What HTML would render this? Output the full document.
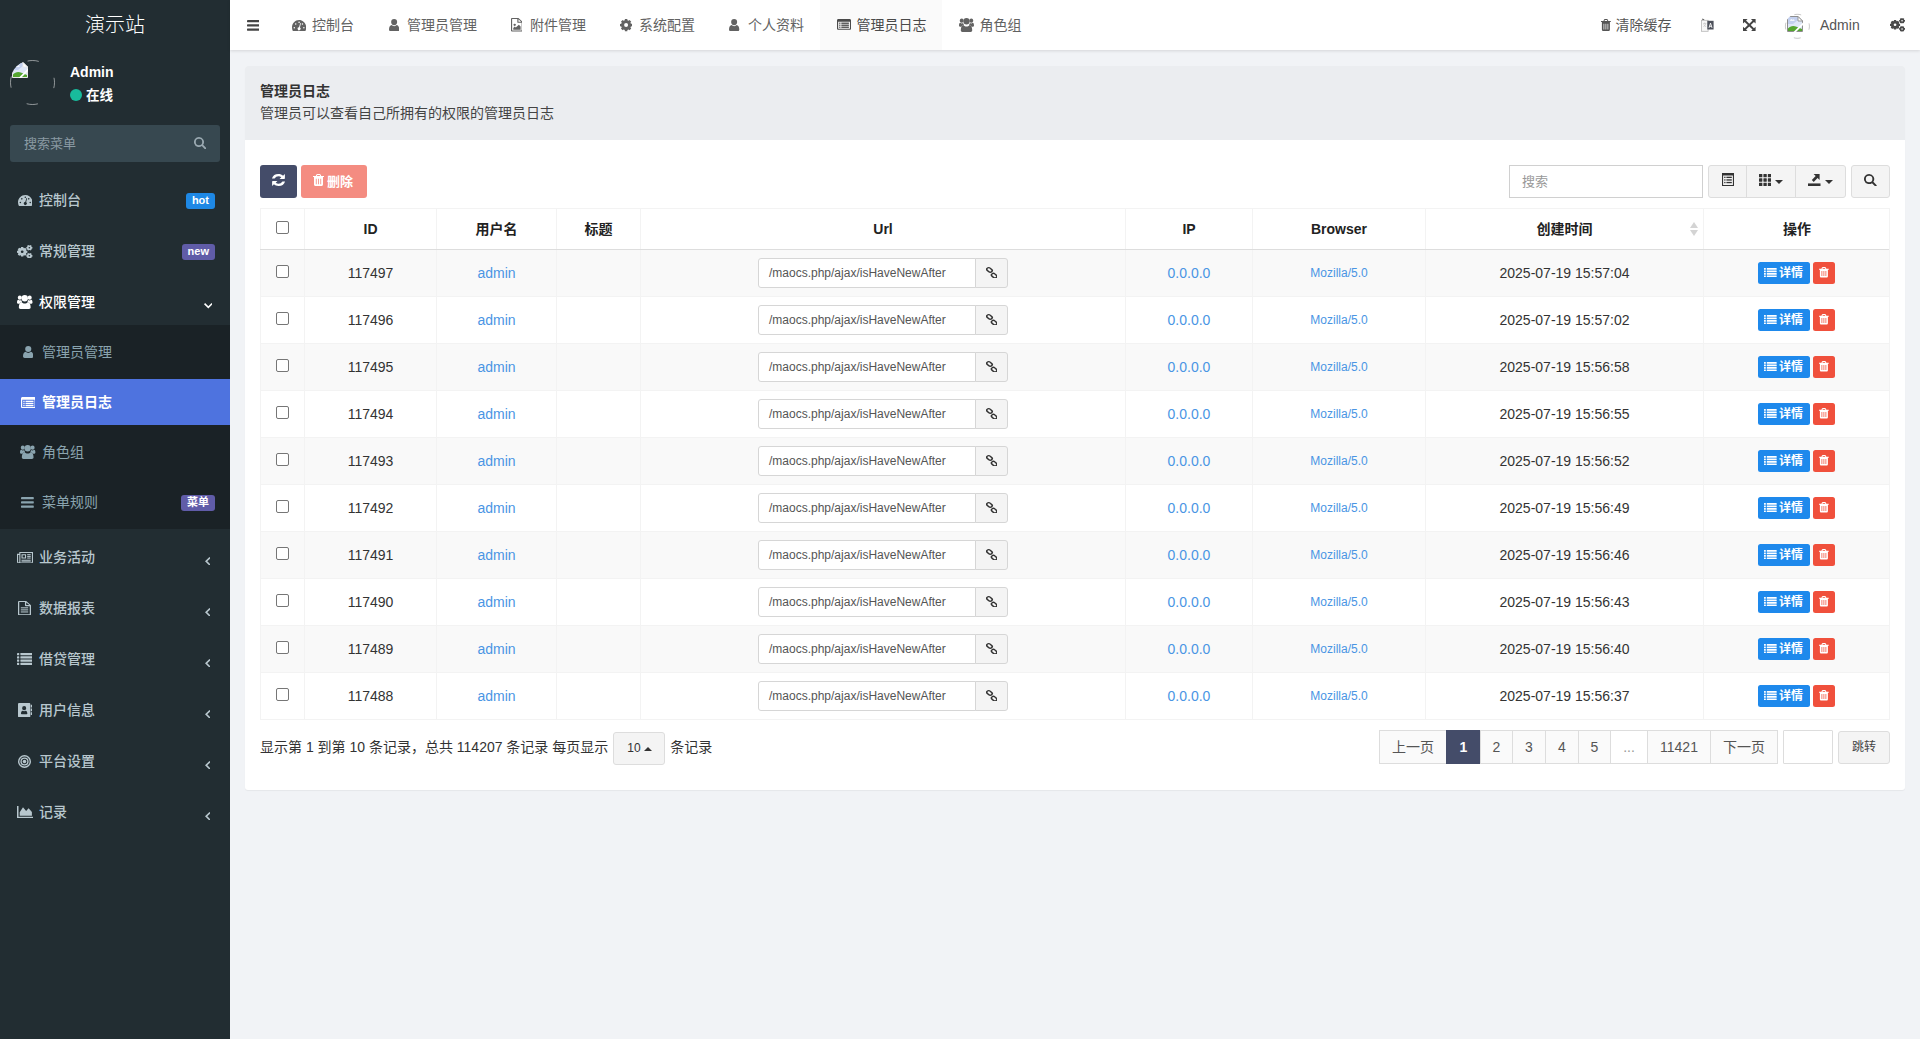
<!DOCTYPE html>
<html lang="zh-CN">
<head>
<meta charset="utf-8">
<title>管理员日志</title>
<style>
*{box-sizing:border-box;}
html,body{margin:0;padding:0;}
body{width:1920px;height:1039px;overflow:hidden;background:#f1f3f6;font-family:"Liberation Sans","Noto Sans CJK SC",sans-serif;font-size:14px;color:#333;position:relative;}
svg{display:block;}
/* ---------- sidebar ---------- */
#side{position:absolute;left:0;top:0;width:230px;height:1039px;background:#222d32;}
#logo{position:absolute;left:0;top:0;width:230px;height:50px;line-height:50px;text-align:center;color:#fff;font-size:20px;font-weight:300;}
#avatar{position:absolute;left:10px;top:60px;width:45px;height:45px;border-radius:50%;border:1px solid rgba(255,255,255,.18);color:#dfe5e8;}
#uname{position:absolute;left:70px;top:63px;color:#fff;font-weight:bold;font-size:14px;line-height:18px;}
#ustat{position:absolute;left:70px;top:87px;color:#fff;font-size:13.5px;font-weight:bold;line-height:18px;}
#ustat i{display:inline-block;width:12px;height:12px;border-radius:50%;background:#18bc9c;margin-right:4px;vertical-align:-1px;}
#sform{position:absolute;left:10px;top:125px;width:210px;height:37px;background:#374850;border-radius:3px;color:#8a9aa3;font-size:13px;line-height:37px;padding-left:14px;}
.mi{position:absolute;left:0;width:230px;height:51px;font-size:14px;font-weight:500;}
.mi .tx{position:absolute;left:39px;top:15px;line-height:20px;}
.badge{position:absolute;right:15px;height:16px;line-height:15px;border-radius:3px;color:#fff;font-size:11px;font-weight:bold;padding:0 6px;}
#sub{position:absolute;left:0;top:325px;width:230px;height:204px;background:#1a2226;}
.sm{position:absolute;left:0;width:230px;height:50px;color:#8aa4af;font-size:14px;}
.sm.on{color:#fff;font-weight:bold;}
.sm.on:before{content:"";position:absolute;left:0;top:2px;width:230px;height:46px;background:#4e73df;}
.sm .tx{position:absolute;left:42px;top:15px;line-height:20px;}
/* ---------- topbar ---------- */
#top{position:absolute;left:230px;top:0;width:1690px;height:50px;background:#fff;box-shadow:0 1px 3px rgba(0,0,0,.12);color:#555;}
#ham{position:absolute;left:16px;top:18px;color:#444;}
.tab{position:absolute;top:0;height:50px;line-height:51px;color:#626262;font-size:14px;white-space:nowrap;}
.tab .tt{position:absolute;top:0;}
.tab.on{background:#fafafa;color:#4a4a4a;}
.rt{position:absolute;top:0;height:50px;line-height:51px;color:#555;font-size:14px;white-space:nowrap;}
#tav{position:absolute;left:1555px;top:14px;width:25px;height:25px;border-radius:50%;border:1px solid transparent;border-right-color:#e0e0e0;border-bottom-color:#e8e8e8;}
/* ---------- panel ---------- */
#panel{position:absolute;left:245px;top:66px;width:1660px;height:724px;background:#fff;border-radius:3px;box-shadow:0 1px 1px rgba(0,0,0,.05);}
#phead{position:absolute;left:0;top:0;width:1660px;height:74px;background:#ebedf0;border-radius:3px 3px 0 0;}
#phead b{position:absolute;left:15px;top:15px;font-size:14px;line-height:20px;color:#333;}
#phead span{position:absolute;left:15px;top:37px;font-size:14px;line-height:20px;color:#444;}
.btn{position:absolute;border-radius:3px;white-space:nowrap;}
#sinput{position:absolute;left:1264px;top:99px;width:194px;height:33px;border:1px solid #d0d0d0;border-radius:0;color:#999;font-size:13px;line-height:31px;padding-left:12px;background:#fff;}
.gbtn{position:absolute;top:99px;height:33px;background:#f4f4f4;border:1px solid #ddd;color:#333;}
.caret{position:absolute;top:14px;width:0;height:0;border-left:4px solid transparent;border-right:4px solid transparent;border-top:4px solid #333;}
/* table */
#tbl{position:absolute;left:15px;top:142px;width:1630px;height:512px;border-top:1px solid #f3f3f3;}
.thead{position:absolute;left:0;top:0;width:1630px;height:40px;}
.th{position:absolute;top:0;height:40px;line-height:40px;text-align:center;font-weight:bold;color:#222;font-size:14px;border-left:1px solid #f3f3f3;}
.tr{position:absolute;left:0;width:1630px;height:47px;border-top:1px solid #f3f3f3;}
.tr.odd{background:#f9f9f9;}
.tr.first{border-top-color:#ddd;}
.td{position:absolute;top:0;height:46px;line-height:46px;text-align:center;font-size:14px;color:#333;border-left:1px solid #f3f3f3;white-space:nowrap;}
#tbl:after{content:"";position:absolute;right:0;top:0;width:1px;height:511px;background:#f3f3f3;}
#tbl:before{content:"";position:absolute;left:0;bottom:0;width:1630px;height:1px;background:#f3f3f3;}
.cb{position:absolute;left:15px;width:13px;height:13px;border:1px solid #767676;border-radius:2px;background:#fff;}
.lk{color:#4a95e4;}
.ig{position:absolute;left:117px;top:8px;width:250px;height:30px;}
.igt{position:absolute;left:0;top:0;width:218px;height:30px;border:1px solid #d6d6d6;border-radius:3px 0 0 3px;background:#fff;font-size:12px;color:#555;line-height:28px;text-align:left;padding-left:10px;}
.iga{position:absolute;left:217px;top:0;width:33px;height:30px;border:1px solid #d6d6d6;border-radius:0 3px 3px 0;background:#f4f4f4;color:#333;}
.bd{position:absolute;left:54px;top:12px;width:52px;height:22px;background:#1e89ec;border-radius:2.500px;color:#fff;font-size:12px;font-weight:bold;line-height:23px;text-align:left;padding-left:21px;}
.bx{position:absolute;left:109px;top:12px;width:22px;height:22px;background:#f0503c;border-radius:2.500px;color:#fff;}
.sup{position:absolute;right:5.500px;top:13px;width:0;height:0;border-left:4px solid transparent;border-right:4px solid transparent;border-bottom:6.500px solid #d4d4d4;}
.sdn{position:absolute;right:5.500px;top:20.700px;width:0;height:0;border-left:4px solid transparent;border-right:4px solid transparent;border-top:6.500px solid #d4d4d4;}
/* pagination */
#pinfo{position:absolute;left:15px;top:664px;height:34px;line-height:34px;font-size:14px;color:#333;white-space:nowrap;}
#psize{display:inline-block;position:relative;width:52px;height:33px;margin:0 5px 0 5px;border:1px solid #ddd;border-radius:3px;background:#f4f4f4;vertical-align:top;margin-top:2px;line-height:30px;font-size:12px;padding-left:13px;}
.caretup{position:absolute;left:30px;top:14px;width:0;height:0;border-left:4px solid transparent;border-right:4px solid transparent;border-bottom:4px solid #333;}
.pg{position:absolute;top:664px;height:34px;line-height:32px;text-align:center;border:1px solid #ddd;background:#fafafa;color:#555;font-size:14px;}
.pg.on{background:#444c69;border-color:#444c69;color:#fff;font-weight:bold;}
.pg.dis{background:#fff;color:#999;}
#jin{position:absolute;left:1538px;top:664px;width:50px;height:34px;border:1px solid #ddd;border-radius:1px;background:#fff;}
#jbtn{position:absolute;left:1593px;top:665px;width:52px;height:33px;border:1px solid #ddd;border-radius:3px;background:#f4f4f4;color:#444;font-size:12px;line-height:30px;text-align:center;}

</style>
</head>
<body>
<div id="side">
  <div id="logo">演示站</div>
  <svg width="47" height="47" viewBox="0 0 47 47" style="position:absolute;left:9px;top:59px"><circle cx="23.500" cy="23.500" r="22" fill="none" stroke="rgba(255,255,255,.5)" stroke-width="1" stroke-dasharray="11.500 23.060" stroke-dashoffset="5.750"/></svg><div style="position:absolute;left:10px;top:60px;width:45px;height:45px;border-radius:50%;overflow:hidden"><svg width="16" height="16" viewBox="0 0 16 16" style="position:absolute;left:2px;top:2px"><path d="M.5.500h10.500l4.500 4.500v10.500H.5z" fill="#dfe7f7" stroke="#e8e8e8" stroke-width="1"/><path d="M1 1h10v3l-5 4H1z" fill="#c3d0ef"/><path d="M11 .5v4.500h4.500z" fill="#fff" stroke="#e8e8e8" stroke-width=".9"/><path d="M3 4.800c.6-1.600 2-1.800 2.600-.9.800-.7 2-.2 2 .9z" fill="#fff"/><path d="M1 15V12.500C3 10 6.500 9.200 9.500 10.800L15 13v2z" fill="#55a630"/><path d="M6.500 16L16 6.500V9L9 16z" fill="#fff"/></svg></div>
  <div id="uname">Admin</div>
  <div id="ustat"><i></i>在线</div>
  <div id="sform">搜索菜单<svg width="12.4" height="12.4" viewBox="1.00 1.00 13.90 13.90" preserveAspectRatio="none" fill="currentColor" style="position:absolute;left:183.8px;top:11.800000000000011px;color:#9aa9b1"><path fill-rule="evenodd" d="M6.600 1a5.600 5.600 0 1 0 3.150 10.230l3.420 3.420a1.050 1.050 0 0 0 1.480-1.480l-3.420-3.420A5.600 5.600 0 0 0 6.600 1zm0 2a3.600 3.600 0 1 1 0 7.200 3.600 3.600 0 0 1 0-7.200z"/></svg></div>
  <div class="mi" style="top:175px;color:#b8c7ce"><svg width="14.6" height="11.6" viewBox="0.00 2.00 16.00 12.60" preserveAspectRatio="none" fill="currentColor" style="position:absolute;left:17.6px;top:19.5px;"><path fill-rule="evenodd" d="M8 2C3.6 2 0 5.6 0 10c0 1.5.4 3 1.2 4.2.2.3.4.4.7.4h12.2c.3 0 .5-.1.7-.4C15.600 13 16 11.500 16 10c0-4.400-3.600-8-8-8zM1.75 10.20a0.85 0.85 0 1 0 1.7 0a0.85 0.85 0 1 0 -1.7 0zM3.35 6.20a0.85 0.85 0 1 0 1.7 0a0.85 0.85 0 1 0 -1.7 0zM7.15 4.50a0.85 0.85 0 1 0 1.7 0a0.85 0.85 0 1 0 -1.7 0zM10.95 6.20a0.85 0.85 0 1 0 1.7 0a0.85 0.85 0 1 0 -1.7 0zM12.55 10.20a0.85 0.85 0 1 0 1.7 0a0.85 0.85 0 1 0 -1.7 0zM9.32 5.29L7.94 9.70A1.6 1.6 0 1 0 8.90 9.98L10.08 5.51z"/></svg><span class="tx">控制台</span><span class="badge" style="top:18px;background:#1e88e5">hot</span></div><div class="mi" style="top:226px;color:#b8c7ce"><svg width="15.4" height="13.6" viewBox="0.13 0.39 15.64 15.22" preserveAspectRatio="none" fill="currentColor" style="position:absolute;left:17.3px;top:18.5px;"><path fill-rule="evenodd" d="M10.67 6.84L10.67 9.16L9.66 9.28L9.32 10.11L9.95 10.91L8.31 12.55L7.51 11.92L6.68 12.26L6.56 13.27L4.24 13.27L4.12 12.26L3.29 11.92L2.49 12.55L0.85 10.91L1.48 10.11L1.14 9.28L0.13 9.16L0.13 6.84L1.14 6.72L1.48 5.89L0.85 5.09L2.49 3.45L3.29 4.08L4.12 3.74L4.24 2.73L6.56 2.73L6.68 3.74L7.51 4.08L8.31 3.45L9.95 5.09L9.32 5.89L9.66 6.72zM4.00 8.00a1.4 1.4 0 1 0 2.8 0a1.4 1.4 0 1 0 -2.8 0zM15.77 2.59L15.77 4.41L15.06 4.47L14.72 5.06L15.02 5.70L13.45 6.61L13.04 6.03L12.36 6.03L11.95 6.61L10.38 5.70L10.68 5.06L10.34 4.47L9.63 4.41L9.63 2.59L10.34 2.53L10.68 1.94L10.38 1.30L11.95 0.39L12.36 0.97L13.04 0.97L13.45 0.39L15.02 1.30L14.72 1.94L15.06 2.53zM11.85 3.50a0.85 0.85 0 1 0 1.7 0a0.85 0.85 0 1 0 -1.7 0zM15.77 11.59L15.77 13.41L15.06 13.47L14.72 14.06L15.02 14.70L13.45 15.61L13.04 15.03L12.36 15.03L11.95 15.61L10.38 14.70L10.68 14.06L10.34 13.47L9.63 13.41L9.63 11.59L10.34 11.53L10.68 10.94L10.38 10.30L11.95 9.39L12.36 9.97L13.04 9.97L13.45 9.39L15.02 10.30L14.72 10.94L15.06 11.53zM11.85 12.50a0.85 0.85 0 1 0 1.7 0a0.85 0.85 0 1 0 -1.7 0z"/></svg><span class="tx">常规管理</span><span class="badge" style="top:18px;background:#605ca8">new</span></div><div class="mi" style="top:277px;color:#fff"><svg width="15.5" height="14" viewBox="0.00 1.30 16.00 14.20" preserveAspectRatio="none" fill="currentColor" style="position:absolute;left:17.2px;top:18.3px;"><circle cx="8" cy="4.600" r="3.300"/><path d="M3.600 15.500c-1 0-1.700-.7-1.700-1.700 0-3.200 1.200-5.200 2.900-5.400.9 1 2 1.600 3.200 1.600s2.300-.6 3.200-1.600c1.700.2 2.900 2.200 2.900 5.400 0 1-.7 1.700-1.700 1.700z"/><circle cx="2.900" cy="4" r="2.100"/><path d="M0 8.800C0 7 .7 6.200 1.500 6.200c.4.400 1 .6 1.500.6s1-.1 1.400-.4c.1.700.4 1.400.9 2-1.100.1-2 .7-2.700 1.700H1.700C.7 10.100 0 9.600 0 8.800z"/><circle cx="13.100" cy="4" r="2.100"/><path d="M16 8.800C16 7 15.300 6.200 14.500 6.200c-.4.400-1 .6-1.500.6s-1-.1-1.400-.4c-.1.700-.4 1.400-.9 2 1.100.1 2 .7 2.700 1.700h.9c1 0 1.700-.5 1.700-1.300z"/></svg><span class="tx">权限管理</span><svg width="8.7" height="5.6" viewBox="2.20 5.00 11.60 7.30" preserveAspectRatio="none" fill="currentColor" style="position:absolute;left:203.8px;top:26.2px;"><path d="M3.700 5L8 9.300 12.300 5l1.500 1.500L8 12.300 2.200 6.500z"/></svg></div><div id="sub"></div><div class="sm" style="top:327px"><svg width="10.5" height="12" viewBox="2.00 1.20 12.00 14.00" preserveAspectRatio="none" fill="currentColor" style="position:absolute;left:22.9px;top:19.2px;"><circle cx="8" cy="4.700" r="3.500"/><path d="M2 13.200c0-3 1.400-5 3-5.200.8.800 1.800 1.300 3 1.300s2.200-.5 3-1.300c1.600.2 3 2.200 3 5.200 0 1.200-.9 2-1.900 2H3.900c-1 0-1.900-.8-1.900-2z"/></svg><span class="tx">管理员管理</span></div><div class="sm on" style="top:377px"><svg width="14.8" height="11.3" viewBox="0.00 1.80 16.00 12.40" preserveAspectRatio="none" fill="currentColor" style="position:absolute;left:20.6px;top:19.549999999999997px;"><path fill-rule="evenodd" d="M1.600 1.800h12.800c.9 0 1.600.7 1.600 1.600v9.200c0 .9-.7 1.600-1.600 1.600H1.600C.7 14.200 0 13.500 0 12.600V3.400c0-.9.7-1.600 1.600-1.600zM1.300 4.900v7.700c0 .2.100.3.300.3h12.800c.2 0 .3-.1.300-.3V4.900z"/><rect x="2.500" y="5.900" width="1.400" height="1.500"/><rect x="4.900" y="5.900" width="8.600" height="1.500"/><rect x="2.500" y="8.200" width="1.400" height="1.500"/><rect x="4.900" y="8.200" width="8.600" height="1.500"/><rect x="2.500" y="10.500" width="1.400" height="1.500"/><rect x="4.900" y="10.500" width="8.600" height="1.500"/></svg><span class="tx">管理员日志</span></div><div class="sm" style="top:427px"><svg width="15.4" height="14" viewBox="0.00 1.30 16.00 14.20" preserveAspectRatio="none" fill="currentColor" style="position:absolute;left:20.2px;top:18.2px;"><circle cx="8" cy="4.600" r="3.300"/><path d="M3.600 15.500c-1 0-1.700-.7-1.700-1.700 0-3.200 1.200-5.200 2.900-5.400.9 1 2 1.600 3.200 1.600s2.300-.6 3.200-1.600c1.700.2 2.900 2.200 2.900 5.400 0 1-.7 1.700-1.700 1.700z"/><circle cx="2.900" cy="4" r="2.100"/><path d="M0 8.800C0 7 .7 6.200 1.500 6.200c.4.400 1 .6 1.500.6s1-.1 1.400-.4c.1.700.4 1.400.9 2-1.100.1-2 .7-2.700 1.700H1.700C.7 10.100 0 9.600 0 8.800z"/><circle cx="13.100" cy="4" r="2.100"/><path d="M16 8.800C16 7 15.300 6.200 14.500 6.200c-.4.400-1 .6-1.500.6s-1-.1-1.400-.4c-.1.700-.4 1.400-.9 2 1.100.1 2 .7 2.700 1.700h.9c1 0 1.700-.5 1.700-1.300z"/></svg><span class="tx">角色组</span></div><div class="sm" style="top:477px"><svg width="12.8" height="10.8" viewBox="1.00 2.40 14.00 11.20" preserveAspectRatio="none" fill="currentColor" style="position:absolute;left:21.3px;top:19.799999999999997px;"><rect x="1" y="2.400" width="14" height="2.300" rx=".5"/><rect x="1" y="6.850" width="14" height="2.300" rx=".5"/><rect x="1" y="11.300" width="14" height="2.300" rx=".5"/></svg><span class="tx">菜单规则</span><span class="badge" style="top:18px;background:#605ca8">菜单</span></div><div class="mi" style="top:532px;color:#b8c7ce"><svg width="16" height="11.5" viewBox="0.00 2.30 16.00 11.90" preserveAspectRatio="none" fill="currentColor" style="position:absolute;left:16.6px;top:19.55px;"><path fill-rule="evenodd" d="M2.300 2.300h13.700v10.300c0 .9-.7 1.600-1.600 1.600H1.700C.8 14.200 0 13.500 0 12.500V4.200h2.300zM3.400 3.400v9.100c0 .2 0 .4-.1.600h11.100c.3 0 .5-.2.500-.5V3.400zM1.100 5.300v7.200c0 .3.300.6.600.6s.6-.3.600-.6V5.300z"/><path fill-rule="evenodd" d="M4.500 4.500h4.600v4.600H4.500zM5.600 5.600v2.400H8V5.600z"/><rect x="10.200" y="4.500" width="3.500" height="1.100"/><rect x="10.200" y="6.300" width="3.500" height="1.100"/><rect x="10.200" y="8" width="3.500" height="1.100"/><rect x="4.500" y="10.300" width="9.200" height="1.100"/><rect x="4.500" y="12" width="9.200" height="0.800"/></svg><span class="tx">业务活动</span><svg width="5.6" height="8.6" viewBox="3.70 2.20 7.30 11.60" preserveAspectRatio="none" fill="currentColor" style="position:absolute;left:204.8px;top:24.8px;"><path d="M11 3.700L6.700 8l4.300 4.300-1.500 1.500L3.700 8l5.800-5.800z"/></svg></div><div class="mi" style="top:583px;color:#b8c7ce"><svg width="13" height="14.4" viewBox="1.90 0.00 12.50 16.00" preserveAspectRatio="none" fill="currentColor" style="position:absolute;left:18.2px;top:18.1px;"><path fill-rule="evenodd" d="M2.900 0h6.900l4.600 4.600V15c0 .6-.4 1-1 1H2.900c-.6 0-1-.4-1-1V1c0-.6.400-1 1-1zM3.100 1.200v13.600h10.100V5.700H9.400c-.5 0-.8-.3-.8-.8V1.200zM9.800 1.600v2.900h2.900z"/><rect x="4.600" y="7" width="7.100" height="1.150"/><rect x="4.600" y="9.300" width="7.100" height="1.150"/><rect x="4.600" y="11.600" width="7.100" height="1.150"/></svg><span class="tx">数据报表</span><svg width="5.6" height="8.6" viewBox="3.70 2.20 7.30 11.60" preserveAspectRatio="none" fill="currentColor" style="position:absolute;left:204.8px;top:24.8px;"><path d="M11 3.700L6.700 8l4.300 4.300-1.500 1.500L3.700 8l5.800-5.800z"/></svg></div><div class="mi" style="top:634px;color:#b8c7ce"><svg width="15.5" height="12" viewBox="0.00 2.30 16.00 11.75" preserveAspectRatio="none" fill="currentColor" style="position:absolute;left:16.8px;top:19.3px;"><rect x="0" y="2.300" width="2.300" height="2.300" rx=".4"/><rect x="3.500" y="2.300" width="12.500" height="2.300" rx=".4"/><rect x="0" y="5.450" width="2.300" height="2.300" rx=".4"/><rect x="3.500" y="5.450" width="12.500" height="2.300" rx=".4"/><rect x="0" y="8.600" width="2.300" height="2.300" rx=".4"/><rect x="3.500" y="8.600" width="12.500" height="2.300" rx=".4"/><rect x="0" y="11.750" width="2.300" height="2.300" rx=".4"/><rect x="3.500" y="11.750" width="12.500" height="2.300" rx=".4"/></svg><span class="tx">借贷管理</span><svg width="5.6" height="8.6" viewBox="3.70 2.20 7.30 11.60" preserveAspectRatio="none" fill="currentColor" style="position:absolute;left:204.8px;top:24.8px;"><path d="M11 3.700L6.700 8l4.300 4.300-1.500 1.500L3.700 8l5.800-5.800z"/></svg></div><div class="mi" style="top:685px;color:#b8c7ce"><svg width="14.2" height="14.4" viewBox="1.40 1.00 13.80 14.00" preserveAspectRatio="none" fill="currentColor" style="position:absolute;left:17.5px;top:18.1px;"><path fill-rule="evenodd" d="M2.600 1h9.600c.7 0 1.200.5 1.200 1.200v11.600c0 .7-.5 1.200-1.200 1.200H2.600c-.7 0-1.200-.5-1.200-1.200V2.200C1.400 1.500 1.900 1 2.600 1zM7.400 4a2 2 0 1 0 0 4 2 2 0 0 0 0-4zM4.300 11.300c0 .4.300.7.700.7h4.800c.4 0 .7-.3.700-.7 0-1.600-.8-2.700-1.700-2.800-.4.300-.9.500-1.400.500S6.400 8.800 6 8.500c-.9.100-1.700 1.200-1.700 2.800z"/><rect x="13.800" y="2.600" width="1.400" height="2.700" rx=".3"/><rect x="13.800" y="6.300" width="1.400" height="2.700" rx=".3"/><rect x="13.800" y="10" width="1.400" height="2.700" rx=".3"/></svg><span class="tx">用户信息</span><svg width="5.6" height="8.6" viewBox="3.70 2.20 7.30 11.60" preserveAspectRatio="none" fill="currentColor" style="position:absolute;left:204.8px;top:24.8px;"><path d="M11 3.700L6.700 8l4.300 4.300-1.500 1.500L3.700 8l5.800-5.800z"/></svg></div><div class="mi" style="top:736px;color:#b8c7ce"><svg width="13" height="13" viewBox="1.00 1.00 14.00 14.00" preserveAspectRatio="none" fill="currentColor" style="position:absolute;left:18.4px;top:18.8px;"><path fill-rule="evenodd" d="M8 1a7 7 0 1 0 0 14A7 7 0 0 0 8 1zm0 1.500a5.500 5.500 0 1 1 0 11 5.500 5.500 0 0 1 0-11zM8 3.600a4.400 4.400 0 1 0 0 8.800 4.400 4.400 0 0 0 0-8.800zm0 1.400a3 3 0 1 1 0 6 3 3 0 0 1 0-6z"/><circle cx="8" cy="8" r="1.900"/></svg><span class="tx">平台设置</span><svg width="5.6" height="8.6" viewBox="3.70 2.20 7.30 11.60" preserveAspectRatio="none" fill="currentColor" style="position:absolute;left:204.8px;top:24.8px;"><path d="M11 3.700L6.700 8l4.300 4.300-1.500 1.500L3.700 8l5.800-5.800z"/></svg></div><div class="mi" style="top:787px;color:#b8c7ce"><svg width="16" height="12.4" viewBox="0.00 2.00 16.00 12.20" preserveAspectRatio="none" fill="currentColor" style="position:absolute;left:16.6px;top:19.1px;"><path d="M1.500 2v10.700H16v1.500H0V2z"/><path d="M2.700 11.600V8.200l3.300-4.900 3.100 3.500 2.500-2.500 3.300 3.700v3.600z"/></svg><span class="tx">记录</span><svg width="5.6" height="8.6" viewBox="3.70 2.20 7.30 11.60" preserveAspectRatio="none" fill="currentColor" style="position:absolute;left:204.8px;top:24.8px;"><path d="M11 3.700L6.700 8l4.300 4.300-1.500 1.500L3.700 8l5.800-5.800z"/></svg></div>
</div>
<div id="top">
  <svg width="12.4" height="10.8" viewBox="1.00 2.40 14.00 11.20" preserveAspectRatio="none" fill="currentColor" style="position:absolute;left:16.599999999999994px;top:19.8px;color:#444"><rect x="1" y="2.400" width="14" height="2.300" rx=".5"/><rect x="1" y="6.850" width="14" height="2.300" rx=".5"/><rect x="1" y="11.300" width="14" height="2.300" rx=".5"/></svg><div class="tab" style="left:45px;width:95px"><svg width="14.2" height="11.8" viewBox="0.00 2.00 16.00 12.60" preserveAspectRatio="none" fill="currentColor" style="position:absolute;left:17px;top:19.5px;"><path fill-rule="evenodd" d="M8 2C3.6 2 0 5.6 0 10c0 1.5.4 3 1.2 4.2.2.3.4.4.7.4h12.2c.3 0 .5-.1.7-.4C15.600 13 16 11.500 16 10c0-4.400-3.600-8-8-8zM1.75 10.20a0.85 0.85 0 1 0 1.7 0a0.85 0.85 0 1 0 -1.7 0zM3.35 6.20a0.85 0.85 0 1 0 1.7 0a0.85 0.85 0 1 0 -1.7 0zM7.15 4.50a0.85 0.85 0 1 0 1.7 0a0.85 0.85 0 1 0 -1.7 0zM10.95 6.20a0.85 0.85 0 1 0 1.7 0a0.85 0.85 0 1 0 -1.7 0zM12.55 10.20a0.85 0.85 0 1 0 1.7 0a0.85 0.85 0 1 0 -1.7 0zM9.32 5.29L7.94 9.70A1.6 1.6 0 1 0 8.90 9.98L10.08 5.51z"/></svg><span class="tt" style="left:37px">控制台</span></div><div class="tab" style="left:143px;width:120px"><svg width="10.3" height="12.4" viewBox="2.00 1.20 12.00 14.00" preserveAspectRatio="none" fill="currentColor" style="position:absolute;left:15.899999999999977px;top:18.5px;"><circle cx="8" cy="4.700" r="3.500"/><path d="M2 13.200c0-3 1.400-5 3-5.200.8.800 1.800 1.300 3 1.300s2.200-.5 3-1.300c1.600.2 3 2.200 3 5.200 0 1.200-.9 2-1.900 2H3.900c-1 0-1.900-.8-1.900-2z"/></svg><span class="tt" style="left:34px">管理员管理</span></div><div class="tab" style="left:265px;width:107px"><svg width="11.8" height="13.6" viewBox="1.90 0.00 12.50 16.00" preserveAspectRatio="none" fill="currentColor" style="position:absolute;left:15.5px;top:18.4px;"><path fill-rule="evenodd" d="M2.900 0h6.900l4.600 4.600V15c0 .6-.4 1-1 1H2.900c-.6 0-1-.4-1-1V1c0-.6.400-1 1-1zM3.100 1.200v13.600h10.100V5.700H9.400c-.5 0-.8-.3-.8-.8V1.200zM9.800 1.600v2.900h2.900z"/><circle cx="5.800" cy="8" r="1.300"/><path d="M4.300 13.700v-2l1.600-1.600 1.100 1.100 3.200-3.200 1.900 1.900v3.800z"/></svg><span class="tt" style="left:35px">附件管理</span></div><div class="tab" style="left:374px;width:107px"><svg width="12.2" height="12.2" viewBox="0.94 0.94 14.12 14.12" preserveAspectRatio="none" fill="currentColor" style="position:absolute;left:15.600000000000023px;top:19.4px;"><path fill-rule="evenodd" d="M15.06 6.60L15.06 9.40L13.60 9.52L13.03 10.88L13.99 12.00L12.00 13.99L10.88 13.03L9.52 13.60L9.40 15.06L6.60 15.06L6.48 13.60L5.12 13.03L4.00 13.99L2.01 12.00L2.97 10.88L2.40 9.52L0.94 9.40L0.94 6.60L2.40 6.48L2.97 5.12L2.01 4.00L4.00 2.01L5.12 2.97L6.48 2.40L6.60 0.94L9.40 0.94L9.52 2.40L10.88 2.97L12.00 2.01L13.99 4.00L13.03 5.12L13.60 6.48zM5.70 8.00a2.3 2.3 0 1 0 4.6 0a2.3 2.3 0 1 0 -4.6 0z"/></svg><span class="tt" style="left:35px">系统配置</span></div><div class="tab" style="left:483px;width:107px"><svg width="10.3" height="12.4" viewBox="2.00 1.20 12.00 14.00" preserveAspectRatio="none" fill="currentColor" style="position:absolute;left:16.299999999999955px;top:18.5px;"><circle cx="8" cy="4.700" r="3.500"/><path d="M2 13.200c0-3 1.400-5 3-5.200.8.800 1.800 1.300 3 1.300s2.200-.5 3-1.300c1.600.2 3 2.200 3 5.200 0 1.200-.9 2-1.900 2H3.900c-1 0-1.900-.8-1.900-2z"/></svg><span class="tt" style="left:35px">个人资料</span></div><div class="tab on" style="left:590px;width:122px"><svg width="14.1" height="10.8" viewBox="0.00 1.80 16.00 12.40" preserveAspectRatio="none" fill="currentColor" style="position:absolute;left:16.700000000000045px;top:19.1px;"><path fill-rule="evenodd" d="M1.600 1.800h12.800c.9 0 1.600.7 1.600 1.600v9.200c0 .9-.7 1.600-1.600 1.600H1.600C.7 14.200 0 13.500 0 12.600V3.400c0-.9.7-1.600 1.600-1.600zM1.300 4.900v7.700c0 .2.100.3.300.3h12.800c.2 0 .3-.1.300-.3V4.900z"/><rect x="2.500" y="5.900" width="1.400" height="1.500"/><rect x="4.900" y="5.900" width="8.600" height="1.500"/><rect x="2.500" y="8.200" width="1.400" height="1.500"/><rect x="4.900" y="8.200" width="8.600" height="1.500"/><rect x="2.500" y="10.500" width="1.400" height="1.500"/><rect x="4.900" y="10.500" width="8.600" height="1.500"/></svg><span class="tt" style="left:36.5px">管理员日志</span></div><div class="tab" style="left:713px;width:95px"><svg width="15" height="14" viewBox="0.00 1.30 16.00 14.20" preserveAspectRatio="none" fill="currentColor" style="position:absolute;left:16px;top:17.8px;"><circle cx="8" cy="4.600" r="3.300"/><path d="M3.600 15.500c-1 0-1.700-.7-1.700-1.700 0-3.200 1.200-5.200 2.900-5.400.9 1 2 1.600 3.200 1.600s2.300-.6 3.200-1.600c1.700.2 2.900 2.200 2.900 5.400 0 1-.7 1.700-1.700 1.700z"/><circle cx="2.900" cy="4" r="2.100"/><path d="M0 8.800C0 7 .7 6.200 1.500 6.200c.4.400 1 .6 1.500.6s1-.1 1.400-.4c.1.700.4 1.400.9 2-1.100.1-2 .7-2.700 1.700H1.700C.7 10.100 0 9.600 0 8.800z"/><circle cx="13.100" cy="4" r="2.100"/><path d="M16 8.800C16 7 15.300 6.200 14.500 6.200c-.4.400-1 .6-1.500.6s-1-.1-1.400-.4c-.1.700-.4 1.400-.9 2 1.100.1 2 .7 2.700 1.700h.9c1 0 1.700-.5 1.700-1.300z"/></svg><span class="tt" style="left:36.39999999999998px">角色组</span></div><svg width="9.8" height="12.2" viewBox="2.00 0.40 12.00 13.70" preserveAspectRatio="none" fill="currentColor" style="position:absolute;left:1370.9px;top:18.8px;color:#555"><path fill-rule="evenodd" d="M5.600 1.200c.2-.5.700-.8 1.200-.8h2.400c.5 0 1 .3 1.200.8l.6 1.400h2.700c.2 0 .3.100.3.300v.6c0 .2-.1.300-.3.300h-.8v8.500c0 1-.7 1.800-1.500 1.800H4.600c-.8 0-1.500-.8-1.500-1.800V3.800h-.8c-.2 0-.3-.1-.3-.3v-.6c0-.2.100-.3.300-.3H5zM6.300 2.600h3.400l-.4-1H6.700zM5.100 5.700v6.500h.9V5.700zm2.450 0v6.500h.9V5.700zm2.450 0v6.500h.9V5.700z"/></svg><div class="rt" style="left:1385.5px">清除缓存</div><svg width="13" height="14" viewBox="0 0 13 14" style="position:absolute;left:1471px;top:18px"><path d="M1.300.4l2.400 1.100-2.400 1.100z" fill="#555"/><rect x=".5" y="2.300" width="6.600" height="11" fill="#f7f7f7" stroke="#b5b5b5" stroke-width=".8"/><path d="M2.200 5.500h3M3.700 4.500v1M2.500 9l2.500-3.300M2.700 6.300L5 9" stroke="#c4c4c4" stroke-width=".7" fill="none"/><path d="M6.300 2.800h6.300v8.700H6.300z" fill="#4d515b"/><path d="M8 9.800l1.500-4.700L11 9.800M8.600 8.300h1.800" stroke="#fff" stroke-width=".9" fill="none"/></svg><svg width="12.6" height="12.2" viewBox="1.00 1.00 14.00 14.00" preserveAspectRatio="none" fill="currentColor" style="position:absolute;left:1513px;top:18.9px;color:#444"><path d="M1 1h5.200L4.400 2.800l3.600 3.600 3.600-3.600L9.800 1H15v5.200l-1.800-1.800L9.600 8l3.600 3.600 1.800-1.800V15H9.800l1.800-1.800L8 9.600l-3.600 3.600L6.200 15H1V9.800l1.800 1.800L6.400 8 2.800 4.400 1 6.200z"/></svg><svg width="27" height="27" viewBox="0 0 27 27" style="position:absolute;left:1554px;top:13px"><circle cx="13.400" cy="13.300" r="12" fill="none" stroke="rgba(0,0,0,.22)" stroke-width="1" stroke-dasharray="7 11.850" stroke-dashoffset="3.500"/></svg><div style="position:absolute;left:1555px;top:14px;width:25px;height:25px;border-radius:50%;overflow:hidden"><svg width="16" height="16" viewBox="0 0 16 16" style="position:absolute;left:2px;top:2px"><path d="M.5.500h10.500l4.500 4.500v10.500H.5z" fill="#dfe7f7" stroke="#8e8e8e" stroke-width="1"/><path d="M1 1h10v3l-5 4H1z" fill="#c3d0ef"/><path d="M11 .5v4.500h4.500z" fill="#fff" stroke="#8e8e8e" stroke-width=".9"/><path d="M3 4.800c.6-1.600 2-1.800 2.600-.9.800-.7 2-.2 2 .9z" fill="#fff"/><path d="M1 15V12.500C3 10 6.500 9.200 9.500 10.800L15 13v2z" fill="#55a630"/><path d="M6.500 16L16 6.500V9L9 16z" fill="#fff"/></svg></div><div class="rt" style="left:1590px">Admin</div><svg width="15" height="13.7" viewBox="0.13 0.39 15.64 15.22" preserveAspectRatio="none" fill="currentColor" style="position:absolute;left:1660px;top:18.2px;color:#4a4a4a"><path fill-rule="evenodd" d="M10.67 6.84L10.67 9.16L9.66 9.28L9.32 10.11L9.95 10.91L8.31 12.55L7.51 11.92L6.68 12.26L6.56 13.27L4.24 13.27L4.12 12.26L3.29 11.92L2.49 12.55L0.85 10.91L1.48 10.11L1.14 9.28L0.13 9.16L0.13 6.84L1.14 6.72L1.48 5.89L0.85 5.09L2.49 3.45L3.29 4.08L4.12 3.74L4.24 2.73L6.56 2.73L6.68 3.74L7.51 4.08L8.31 3.45L9.95 5.09L9.32 5.89L9.66 6.72zM4.00 8.00a1.4 1.4 0 1 0 2.8 0a1.4 1.4 0 1 0 -2.8 0zM15.77 2.59L15.77 4.41L15.06 4.47L14.72 5.06L15.02 5.70L13.45 6.61L13.04 6.03L12.36 6.03L11.95 6.61L10.38 5.70L10.68 5.06L10.34 4.47L9.63 4.41L9.63 2.59L10.34 2.53L10.68 1.94L10.38 1.30L11.95 0.39L12.36 0.97L13.04 0.97L13.45 0.39L15.02 1.30L14.72 1.94L15.06 2.53zM11.85 3.50a0.85 0.85 0 1 0 1.7 0a0.85 0.85 0 1 0 -1.7 0zM15.77 11.59L15.77 13.41L15.06 13.47L14.72 14.06L15.02 14.70L13.45 15.61L13.04 15.03L12.36 15.03L11.95 15.61L10.38 14.70L10.68 14.06L10.34 13.47L9.63 13.41L9.63 11.59L10.34 11.53L10.68 10.94L10.38 10.30L11.95 9.39L12.36 9.97L13.04 9.97L13.45 9.39L15.02 10.30L14.72 10.94L15.06 11.53zM11.85 12.50a0.85 0.85 0 1 0 1.7 0a0.85 0.85 0 1 0 -1.7 0z"/></svg>
</div>
<div id="panel">
  <div id="phead"><b>管理员日志</b><span>管理员可以查看自己所拥有的权限的管理员日志</span></div>
  <div class="btn" style="left:15px;top:99px;width:37px;height:33px;background:#444c69;color:#fff"><svg width="13" height="12" viewBox="1.70 1.50 12.60 13.00" preserveAspectRatio="none" fill="currentColor" style="position:absolute;left:12px;top:9.300000000000011px;"><path d="M14.200 1.600v4.600c0 .3-.3.600-.6.600H9l1.700-1.700A4 4 0 0 0 8 4a4.100 4.100 0 0 0-3.600 2.200c-.1.200-.2.300-.4.300H2c-.2 0-.3-.2-.3-.4A6.500 6.500 0 0 1 8 1.500c1.700 0 3.300.7 4.400 1.800z"/><path d="M1.800 14.400V9.800c0-.3.300-.6.600-.6H7l-1.700 1.700A4 4 0 0 0 8 12a4.100 4.100 0 0 0 3.600-2.200c.1-.2.200-.3.400-.3h2c.2 0 .3.200.3.400A6.500 6.500 0 0 1 8 14.500c-1.700 0-3.300-.7-4.400-1.800z"/></svg></div><div class="btn" style="left:56px;top:99px;width:66px;height:33px;background:#f48c81;color:#fff;font-size:13px;font-weight:bold;line-height:33px;padding-left:26px"><svg width="11" height="12" viewBox="2.00 0.40 12.00 13.70" preserveAspectRatio="none" fill="currentColor" style="position:absolute;left:12px;top:9.300000000000011px;"><path fill-rule="evenodd" d="M5.600 1.200c.2-.5.700-.8 1.200-.8h2.400c.5 0 1 .3 1.200.8l.6 1.400h2.700c.2 0 .3.100.3.300v.6c0 .2-.1.300-.3.300h-.8v8.500c0 1-.7 1.800-1.500 1.800H4.600c-.8 0-1.500-.8-1.500-1.800V3.800h-.8c-.2 0-.3-.1-.3-.3v-.6c0-.2.100-.3.300-.3H5zM6.300 2.600h3.400l-.4-1H6.700zM5.100 5.700v6.500h.9V5.700zm2.450 0v6.500h.9V5.700zm2.450 0v6.500h.9V5.700z"/></svg>删除</div><div id="sinput">搜索</div><div class="gbtn" style="left:1463px;width:39px;border-radius:3px 0 0 3px"><svg width="12" height="13" viewBox="0.00 0.00 12.00 13.00" preserveAspectRatio="none" fill="currentColor" style="position:absolute;left:13px;top:7px;"><path fill-rule="evenodd" d="M0 0h12v13H0zM1.100 2.400v9.500h9.800V2.400z"/><rect x="2.200" y="3.700" width="1.300" height="1.300"/><rect x="4.400" y="3.700" width="5.400" height="1.300"/><rect x="2.200" y="6.300" width="1.300" height="1.300"/><rect x="4.400" y="6.300" width="5.400" height="1.300"/><rect x="2.200" y="8.900" width="1.300" height="1.300"/><rect x="4.400" y="8.900" width="5.400" height="1.300"/></svg></div><div class="gbtn" style="left:1501px;width:50px;border-radius:0"><svg width="12.2" height="12" viewBox="0.00 1.50 16.00 13.00" preserveAspectRatio="none" fill="currentColor" style="position:absolute;left:11.799999999999955px;top:8.300000000000011px;"><rect x="0" y="1.500" width="4.400" height="3.600" rx=".4"/><rect x="5.800" y="1.500" width="4.400" height="3.600" rx=".4"/><rect x="11.600" y="1.500" width="4.400" height="3.600" rx=".4"/><rect x="0" y="6.200" width="4.400" height="3.600" rx=".4"/><rect x="5.800" y="6.200" width="4.400" height="3.600" rx=".4"/><rect x="11.600" y="6.200" width="4.400" height="3.600" rx=".4"/><rect x="0" y="10.900" width="4.400" height="3.600" rx=".4"/><rect x="5.800" y="10.900" width="4.400" height="3.600" rx=".4"/><rect x="11.600" y="10.900" width="4.400" height="3.600" rx=".4"/></svg><i class="caret" style="left:28px"></i></div><div class="gbtn" style="left:1550px;width:51px;border-radius:0 3px 3px 0"><svg width="12.5" height="12.5" viewBox="1.00 1.00 14.00 13.80" preserveAspectRatio="none" fill="currentColor" style="position:absolute;left:12px;top:7.800000000000011px;"><path d="M1 11.400h14v3.400H1z"/><path d="M7.300 1H14v6.700l-2.300-2.300-4.300 4.300-2.100-2.100 4.300-4.300z"/></svg><i class="caret" style="left:29px"></i></div><div class="gbtn" style="left:1606px;width:39px;border-radius:3px"><svg width="12.7" height="12.5" viewBox="1.00 1.00 13.90 13.90" preserveAspectRatio="none" fill="currentColor" style="position:absolute;left:12.299999999999955px;top:7.800000000000011px;"><path fill-rule="evenodd" d="M6.600 1a5.600 5.600 0 1 0 3.150 10.230l3.420 3.420a1.050 1.050 0 0 0 1.480-1.480l-3.420-3.420A5.600 5.600 0 0 0 6.600 1zm0 2a3.600 3.600 0 1 1 0 7.200 3.600 3.600 0 0 1 0-7.200z"/></svg></div><div id="tbl"><div class="thead"><div class="th" style="left:0px;width:44px"><span class="cb" style="top:12px"></span></div><div class="th" style="left:44px;width:132px">ID</div><div class="th" style="left:176px;width:120px">用户名</div><div class="th" style="left:296px;width:84px">标题</div><div class="th" style="left:380px;width:485px">Url</div><div class="th" style="left:865px;width:127px">IP</div><div class="th" style="left:992px;width:173px">Browser</div><div class="th" style="left:1165px;width:278px">创建时间<i class="sup"></i><i class="sdn"></i></div><div class="th" style="left:1443px;width:187px">操作</div></div><div class="tr odd first" style="top:40px"><div class="td" style="left:0px;width:44px"><span class="cb" style="top:15px"></span></div><div class="td" style="left:44px;width:132px">117497</div><div class="td" style="left:176px;width:120px"><span class="lk">admin</span></div><div class="td" style="left:296px;width:84px"></div><div class="td" style="left:380px;width:485px"><div class="ig"><span class="igt">/maocs.php/ajax/isHaveNewAfter</span><span class="iga"><svg width="11.7" height="11.6" viewBox="1.03 -0.27 13.94 16.54" preserveAspectRatio="none" fill="currentColor" style="position:absolute;left:9.799999999999955px;top:7.699999999999989px;"><g fill="none" stroke="currentColor" stroke-width="1.900" stroke-linecap="round"><rect x="1.600" y="1.600" width="7.200" height="4.600" rx="2.300" transform="rotate(45 5.200 3.900)"/><rect x="7.200" y="9.800" width="7.200" height="4.600" rx="2.300" transform="rotate(45 10.800 12.100)"/></g></svg></span></div></div><div class="td" style="left:865px;width:127px"><span class="lk">0.0.0.0</span></div><div class="td" style="left:992px;width:173px"><span class="lk" style="font-size:12px;position:relative;top:-1px">Mozilla/5.0</span></div><div class="td" style="left:1165px;width:278px">2025-07-19 15:57:04</div><div class="td" style="left:1443px;width:187px"><span class="bd"><svg width="12.7" height="9.4" viewBox="0.00 2.30 16.00 11.75" preserveAspectRatio="none" fill="currentColor" style="position:absolute;left:6.2999999999999545px;top:5.699999999999989px;"><rect x="0" y="2.300" width="2.300" height="2.300" rx=".4"/><rect x="3.500" y="2.300" width="12.500" height="2.300" rx=".4"/><rect x="0" y="5.450" width="2.300" height="2.300" rx=".4"/><rect x="3.500" y="5.450" width="12.500" height="2.300" rx=".4"/><rect x="0" y="8.600" width="2.300" height="2.300" rx=".4"/><rect x="3.500" y="8.600" width="12.500" height="2.300" rx=".4"/><rect x="0" y="11.750" width="2.300" height="2.300" rx=".4"/><rect x="3.500" y="11.750" width="12.500" height="2.300" rx=".4"/></svg>详情</span><span class="bx"><svg width="9.8" height="10.6" viewBox="2.00 0.40 12.00 13.70" preserveAspectRatio="none" fill="currentColor" style="position:absolute;left:6.2000000000000455px;top:5.399999999999977px;"><path fill-rule="evenodd" d="M5.600 1.200c.2-.5.700-.8 1.200-.8h2.400c.5 0 1 .3 1.200.8l.6 1.400h2.700c.2 0 .3.100.3.300v.6c0 .2-.1.300-.3.300h-.8v8.500c0 1-.7 1.800-1.500 1.800H4.600c-.8 0-1.500-.8-1.500-1.800V3.800h-.8c-.2 0-.3-.1-.3-.3v-.6c0-.2.100-.3.300-.3H5zM6.300 2.600h3.400l-.4-1H6.700zM5.100 5.700v6.500h.9V5.700zm2.450 0v6.500h.9V5.700zm2.450 0v6.500h.9V5.700z"/></svg></span></div></div><div class="tr" style="top:87px"><div class="td" style="left:0px;width:44px"><span class="cb" style="top:15px"></span></div><div class="td" style="left:44px;width:132px">117496</div><div class="td" style="left:176px;width:120px"><span class="lk">admin</span></div><div class="td" style="left:296px;width:84px"></div><div class="td" style="left:380px;width:485px"><div class="ig"><span class="igt">/maocs.php/ajax/isHaveNewAfter</span><span class="iga"><svg width="11.7" height="11.6" viewBox="1.03 -0.27 13.94 16.54" preserveAspectRatio="none" fill="currentColor" style="position:absolute;left:9.799999999999955px;top:7.699999999999989px;"><g fill="none" stroke="currentColor" stroke-width="1.900" stroke-linecap="round"><rect x="1.600" y="1.600" width="7.200" height="4.600" rx="2.300" transform="rotate(45 5.200 3.900)"/><rect x="7.200" y="9.800" width="7.200" height="4.600" rx="2.300" transform="rotate(45 10.800 12.100)"/></g></svg></span></div></div><div class="td" style="left:865px;width:127px"><span class="lk">0.0.0.0</span></div><div class="td" style="left:992px;width:173px"><span class="lk" style="font-size:12px;position:relative;top:-1px">Mozilla/5.0</span></div><div class="td" style="left:1165px;width:278px">2025-07-19 15:57:02</div><div class="td" style="left:1443px;width:187px"><span class="bd"><svg width="12.7" height="9.4" viewBox="0.00 2.30 16.00 11.75" preserveAspectRatio="none" fill="currentColor" style="position:absolute;left:6.2999999999999545px;top:5.699999999999989px;"><rect x="0" y="2.300" width="2.300" height="2.300" rx=".4"/><rect x="3.500" y="2.300" width="12.500" height="2.300" rx=".4"/><rect x="0" y="5.450" width="2.300" height="2.300" rx=".4"/><rect x="3.500" y="5.450" width="12.500" height="2.300" rx=".4"/><rect x="0" y="8.600" width="2.300" height="2.300" rx=".4"/><rect x="3.500" y="8.600" width="12.500" height="2.300" rx=".4"/><rect x="0" y="11.750" width="2.300" height="2.300" rx=".4"/><rect x="3.500" y="11.750" width="12.500" height="2.300" rx=".4"/></svg>详情</span><span class="bx"><svg width="9.8" height="10.6" viewBox="2.00 0.40 12.00 13.70" preserveAspectRatio="none" fill="currentColor" style="position:absolute;left:6.2000000000000455px;top:5.399999999999977px;"><path fill-rule="evenodd" d="M5.600 1.200c.2-.5.700-.8 1.200-.8h2.400c.5 0 1 .3 1.200.8l.6 1.400h2.700c.2 0 .3.100.3.300v.6c0 .2-.1.300-.3.300h-.8v8.500c0 1-.7 1.800-1.500 1.800H4.600c-.8 0-1.500-.8-1.500-1.800V3.800h-.8c-.2 0-.3-.1-.3-.3v-.6c0-.2.100-.3.300-.3H5zM6.300 2.600h3.400l-.4-1H6.700zM5.100 5.700v6.500h.9V5.700zm2.450 0v6.500h.9V5.700zm2.450 0v6.500h.9V5.700z"/></svg></span></div></div><div class="tr odd" style="top:134px"><div class="td" style="left:0px;width:44px"><span class="cb" style="top:15px"></span></div><div class="td" style="left:44px;width:132px">117495</div><div class="td" style="left:176px;width:120px"><span class="lk">admin</span></div><div class="td" style="left:296px;width:84px"></div><div class="td" style="left:380px;width:485px"><div class="ig"><span class="igt">/maocs.php/ajax/isHaveNewAfter</span><span class="iga"><svg width="11.7" height="11.6" viewBox="1.03 -0.27 13.94 16.54" preserveAspectRatio="none" fill="currentColor" style="position:absolute;left:9.799999999999955px;top:7.699999999999989px;"><g fill="none" stroke="currentColor" stroke-width="1.900" stroke-linecap="round"><rect x="1.600" y="1.600" width="7.200" height="4.600" rx="2.300" transform="rotate(45 5.200 3.900)"/><rect x="7.200" y="9.800" width="7.200" height="4.600" rx="2.300" transform="rotate(45 10.800 12.100)"/></g></svg></span></div></div><div class="td" style="left:865px;width:127px"><span class="lk">0.0.0.0</span></div><div class="td" style="left:992px;width:173px"><span class="lk" style="font-size:12px;position:relative;top:-1px">Mozilla/5.0</span></div><div class="td" style="left:1165px;width:278px">2025-07-19 15:56:58</div><div class="td" style="left:1443px;width:187px"><span class="bd"><svg width="12.7" height="9.4" viewBox="0.00 2.30 16.00 11.75" preserveAspectRatio="none" fill="currentColor" style="position:absolute;left:6.2999999999999545px;top:5.699999999999989px;"><rect x="0" y="2.300" width="2.300" height="2.300" rx=".4"/><rect x="3.500" y="2.300" width="12.500" height="2.300" rx=".4"/><rect x="0" y="5.450" width="2.300" height="2.300" rx=".4"/><rect x="3.500" y="5.450" width="12.500" height="2.300" rx=".4"/><rect x="0" y="8.600" width="2.300" height="2.300" rx=".4"/><rect x="3.500" y="8.600" width="12.500" height="2.300" rx=".4"/><rect x="0" y="11.750" width="2.300" height="2.300" rx=".4"/><rect x="3.500" y="11.750" width="12.500" height="2.300" rx=".4"/></svg>详情</span><span class="bx"><svg width="9.8" height="10.6" viewBox="2.00 0.40 12.00 13.70" preserveAspectRatio="none" fill="currentColor" style="position:absolute;left:6.2000000000000455px;top:5.399999999999977px;"><path fill-rule="evenodd" d="M5.600 1.200c.2-.5.700-.8 1.200-.8h2.400c.5 0 1 .3 1.200.8l.6 1.400h2.700c.2 0 .3.100.3.300v.6c0 .2-.1.300-.3.300h-.8v8.500c0 1-.7 1.800-1.500 1.800H4.600c-.8 0-1.500-.8-1.500-1.800V3.800h-.8c-.2 0-.3-.1-.3-.3v-.6c0-.2.100-.3.300-.3H5zM6.300 2.600h3.400l-.4-1H6.700zM5.100 5.700v6.500h.9V5.700zm2.450 0v6.500h.9V5.700zm2.450 0v6.500h.9V5.700z"/></svg></span></div></div><div class="tr" style="top:181px"><div class="td" style="left:0px;width:44px"><span class="cb" style="top:15px"></span></div><div class="td" style="left:44px;width:132px">117494</div><div class="td" style="left:176px;width:120px"><span class="lk">admin</span></div><div class="td" style="left:296px;width:84px"></div><div class="td" style="left:380px;width:485px"><div class="ig"><span class="igt">/maocs.php/ajax/isHaveNewAfter</span><span class="iga"><svg width="11.7" height="11.6" viewBox="1.03 -0.27 13.94 16.54" preserveAspectRatio="none" fill="currentColor" style="position:absolute;left:9.799999999999955px;top:7.699999999999989px;"><g fill="none" stroke="currentColor" stroke-width="1.900" stroke-linecap="round"><rect x="1.600" y="1.600" width="7.200" height="4.600" rx="2.300" transform="rotate(45 5.200 3.900)"/><rect x="7.200" y="9.800" width="7.200" height="4.600" rx="2.300" transform="rotate(45 10.800 12.100)"/></g></svg></span></div></div><div class="td" style="left:865px;width:127px"><span class="lk">0.0.0.0</span></div><div class="td" style="left:992px;width:173px"><span class="lk" style="font-size:12px;position:relative;top:-1px">Mozilla/5.0</span></div><div class="td" style="left:1165px;width:278px">2025-07-19 15:56:55</div><div class="td" style="left:1443px;width:187px"><span class="bd"><svg width="12.7" height="9.4" viewBox="0.00 2.30 16.00 11.75" preserveAspectRatio="none" fill="currentColor" style="position:absolute;left:6.2999999999999545px;top:5.699999999999989px;"><rect x="0" y="2.300" width="2.300" height="2.300" rx=".4"/><rect x="3.500" y="2.300" width="12.500" height="2.300" rx=".4"/><rect x="0" y="5.450" width="2.300" height="2.300" rx=".4"/><rect x="3.500" y="5.450" width="12.500" height="2.300" rx=".4"/><rect x="0" y="8.600" width="2.300" height="2.300" rx=".4"/><rect x="3.500" y="8.600" width="12.500" height="2.300" rx=".4"/><rect x="0" y="11.750" width="2.300" height="2.300" rx=".4"/><rect x="3.500" y="11.750" width="12.500" height="2.300" rx=".4"/></svg>详情</span><span class="bx"><svg width="9.8" height="10.6" viewBox="2.00 0.40 12.00 13.70" preserveAspectRatio="none" fill="currentColor" style="position:absolute;left:6.2000000000000455px;top:5.399999999999977px;"><path fill-rule="evenodd" d="M5.600 1.200c.2-.5.700-.8 1.200-.8h2.400c.5 0 1 .3 1.200.8l.6 1.400h2.700c.2 0 .3.100.3.300v.6c0 .2-.1.300-.3.300h-.8v8.500c0 1-.7 1.800-1.500 1.800H4.600c-.8 0-1.500-.8-1.500-1.800V3.800h-.8c-.2 0-.3-.1-.3-.3v-.6c0-.2.100-.3.300-.3H5zM6.300 2.600h3.400l-.4-1H6.700zM5.100 5.700v6.500h.9V5.700zm2.450 0v6.500h.9V5.700zm2.450 0v6.500h.9V5.700z"/></svg></span></div></div><div class="tr odd" style="top:228px"><div class="td" style="left:0px;width:44px"><span class="cb" style="top:15px"></span></div><div class="td" style="left:44px;width:132px">117493</div><div class="td" style="left:176px;width:120px"><span class="lk">admin</span></div><div class="td" style="left:296px;width:84px"></div><div class="td" style="left:380px;width:485px"><div class="ig"><span class="igt">/maocs.php/ajax/isHaveNewAfter</span><span class="iga"><svg width="11.7" height="11.6" viewBox="1.03 -0.27 13.94 16.54" preserveAspectRatio="none" fill="currentColor" style="position:absolute;left:9.799999999999955px;top:7.699999999999989px;"><g fill="none" stroke="currentColor" stroke-width="1.900" stroke-linecap="round"><rect x="1.600" y="1.600" width="7.200" height="4.600" rx="2.300" transform="rotate(45 5.200 3.900)"/><rect x="7.200" y="9.800" width="7.200" height="4.600" rx="2.300" transform="rotate(45 10.800 12.100)"/></g></svg></span></div></div><div class="td" style="left:865px;width:127px"><span class="lk">0.0.0.0</span></div><div class="td" style="left:992px;width:173px"><span class="lk" style="font-size:12px;position:relative;top:-1px">Mozilla/5.0</span></div><div class="td" style="left:1165px;width:278px">2025-07-19 15:56:52</div><div class="td" style="left:1443px;width:187px"><span class="bd"><svg width="12.7" height="9.4" viewBox="0.00 2.30 16.00 11.75" preserveAspectRatio="none" fill="currentColor" style="position:absolute;left:6.2999999999999545px;top:5.699999999999989px;"><rect x="0" y="2.300" width="2.300" height="2.300" rx=".4"/><rect x="3.500" y="2.300" width="12.500" height="2.300" rx=".4"/><rect x="0" y="5.450" width="2.300" height="2.300" rx=".4"/><rect x="3.500" y="5.450" width="12.500" height="2.300" rx=".4"/><rect x="0" y="8.600" width="2.300" height="2.300" rx=".4"/><rect x="3.500" y="8.600" width="12.500" height="2.300" rx=".4"/><rect x="0" y="11.750" width="2.300" height="2.300" rx=".4"/><rect x="3.500" y="11.750" width="12.500" height="2.300" rx=".4"/></svg>详情</span><span class="bx"><svg width="9.8" height="10.6" viewBox="2.00 0.40 12.00 13.70" preserveAspectRatio="none" fill="currentColor" style="position:absolute;left:6.2000000000000455px;top:5.399999999999977px;"><path fill-rule="evenodd" d="M5.600 1.200c.2-.5.700-.8 1.200-.8h2.400c.5 0 1 .3 1.200.8l.6 1.400h2.700c.2 0 .3.100.3.300v.6c0 .2-.1.300-.3.300h-.8v8.500c0 1-.7 1.800-1.500 1.800H4.600c-.8 0-1.500-.8-1.500-1.800V3.800h-.8c-.2 0-.3-.1-.3-.3v-.6c0-.2.100-.3.300-.3H5zM6.300 2.600h3.400l-.4-1H6.700zM5.100 5.700v6.500h.9V5.700zm2.450 0v6.500h.9V5.700zm2.450 0v6.500h.9V5.700z"/></svg></span></div></div><div class="tr" style="top:275px"><div class="td" style="left:0px;width:44px"><span class="cb" style="top:15px"></span></div><div class="td" style="left:44px;width:132px">117492</div><div class="td" style="left:176px;width:120px"><span class="lk">admin</span></div><div class="td" style="left:296px;width:84px"></div><div class="td" style="left:380px;width:485px"><div class="ig"><span class="igt">/maocs.php/ajax/isHaveNewAfter</span><span class="iga"><svg width="11.7" height="11.6" viewBox="1.03 -0.27 13.94 16.54" preserveAspectRatio="none" fill="currentColor" style="position:absolute;left:9.799999999999955px;top:7.699999999999989px;"><g fill="none" stroke="currentColor" stroke-width="1.900" stroke-linecap="round"><rect x="1.600" y="1.600" width="7.200" height="4.600" rx="2.300" transform="rotate(45 5.200 3.900)"/><rect x="7.200" y="9.800" width="7.200" height="4.600" rx="2.300" transform="rotate(45 10.800 12.100)"/></g></svg></span></div></div><div class="td" style="left:865px;width:127px"><span class="lk">0.0.0.0</span></div><div class="td" style="left:992px;width:173px"><span class="lk" style="font-size:12px;position:relative;top:-1px">Mozilla/5.0</span></div><div class="td" style="left:1165px;width:278px">2025-07-19 15:56:49</div><div class="td" style="left:1443px;width:187px"><span class="bd"><svg width="12.7" height="9.4" viewBox="0.00 2.30 16.00 11.75" preserveAspectRatio="none" fill="currentColor" style="position:absolute;left:6.2999999999999545px;top:5.699999999999989px;"><rect x="0" y="2.300" width="2.300" height="2.300" rx=".4"/><rect x="3.500" y="2.300" width="12.500" height="2.300" rx=".4"/><rect x="0" y="5.450" width="2.300" height="2.300" rx=".4"/><rect x="3.500" y="5.450" width="12.500" height="2.300" rx=".4"/><rect x="0" y="8.600" width="2.300" height="2.300" rx=".4"/><rect x="3.500" y="8.600" width="12.500" height="2.300" rx=".4"/><rect x="0" y="11.750" width="2.300" height="2.300" rx=".4"/><rect x="3.500" y="11.750" width="12.500" height="2.300" rx=".4"/></svg>详情</span><span class="bx"><svg width="9.8" height="10.6" viewBox="2.00 0.40 12.00 13.70" preserveAspectRatio="none" fill="currentColor" style="position:absolute;left:6.2000000000000455px;top:5.399999999999977px;"><path fill-rule="evenodd" d="M5.600 1.200c.2-.5.700-.8 1.200-.8h2.400c.5 0 1 .3 1.200.8l.6 1.400h2.700c.2 0 .3.100.3.300v.6c0 .2-.1.300-.3.300h-.8v8.500c0 1-.7 1.800-1.500 1.800H4.600c-.8 0-1.500-.8-1.500-1.800V3.800h-.8c-.2 0-.3-.1-.3-.3v-.6c0-.2.100-.3.300-.3H5zM6.300 2.600h3.400l-.4-1H6.700zM5.100 5.700v6.500h.9V5.700zm2.450 0v6.500h.9V5.700zm2.450 0v6.500h.9V5.700z"/></svg></span></div></div><div class="tr odd" style="top:322px"><div class="td" style="left:0px;width:44px"><span class="cb" style="top:15px"></span></div><div class="td" style="left:44px;width:132px">117491</div><div class="td" style="left:176px;width:120px"><span class="lk">admin</span></div><div class="td" style="left:296px;width:84px"></div><div class="td" style="left:380px;width:485px"><div class="ig"><span class="igt">/maocs.php/ajax/isHaveNewAfter</span><span class="iga"><svg width="11.7" height="11.6" viewBox="1.03 -0.27 13.94 16.54" preserveAspectRatio="none" fill="currentColor" style="position:absolute;left:9.799999999999955px;top:7.699999999999989px;"><g fill="none" stroke="currentColor" stroke-width="1.900" stroke-linecap="round"><rect x="1.600" y="1.600" width="7.200" height="4.600" rx="2.300" transform="rotate(45 5.200 3.900)"/><rect x="7.200" y="9.800" width="7.200" height="4.600" rx="2.300" transform="rotate(45 10.800 12.100)"/></g></svg></span></div></div><div class="td" style="left:865px;width:127px"><span class="lk">0.0.0.0</span></div><div class="td" style="left:992px;width:173px"><span class="lk" style="font-size:12px;position:relative;top:-1px">Mozilla/5.0</span></div><div class="td" style="left:1165px;width:278px">2025-07-19 15:56:46</div><div class="td" style="left:1443px;width:187px"><span class="bd"><svg width="12.7" height="9.4" viewBox="0.00 2.30 16.00 11.75" preserveAspectRatio="none" fill="currentColor" style="position:absolute;left:6.2999999999999545px;top:5.699999999999989px;"><rect x="0" y="2.300" width="2.300" height="2.300" rx=".4"/><rect x="3.500" y="2.300" width="12.500" height="2.300" rx=".4"/><rect x="0" y="5.450" width="2.300" height="2.300" rx=".4"/><rect x="3.500" y="5.450" width="12.500" height="2.300" rx=".4"/><rect x="0" y="8.600" width="2.300" height="2.300" rx=".4"/><rect x="3.500" y="8.600" width="12.500" height="2.300" rx=".4"/><rect x="0" y="11.750" width="2.300" height="2.300" rx=".4"/><rect x="3.500" y="11.750" width="12.500" height="2.300" rx=".4"/></svg>详情</span><span class="bx"><svg width="9.8" height="10.6" viewBox="2.00 0.40 12.00 13.70" preserveAspectRatio="none" fill="currentColor" style="position:absolute;left:6.2000000000000455px;top:5.399999999999977px;"><path fill-rule="evenodd" d="M5.600 1.200c.2-.5.700-.8 1.200-.8h2.400c.5 0 1 .3 1.200.8l.6 1.400h2.700c.2 0 .3.100.3.300v.6c0 .2-.1.300-.3.300h-.8v8.500c0 1-.7 1.800-1.500 1.800H4.600c-.8 0-1.500-.8-1.500-1.800V3.800h-.8c-.2 0-.3-.1-.3-.3v-.6c0-.2.100-.3.300-.3H5zM6.300 2.600h3.400l-.4-1H6.700zM5.100 5.700v6.500h.9V5.700zm2.450 0v6.500h.9V5.700zm2.450 0v6.500h.9V5.700z"/></svg></span></div></div><div class="tr" style="top:369px"><div class="td" style="left:0px;width:44px"><span class="cb" style="top:15px"></span></div><div class="td" style="left:44px;width:132px">117490</div><div class="td" style="left:176px;width:120px"><span class="lk">admin</span></div><div class="td" style="left:296px;width:84px"></div><div class="td" style="left:380px;width:485px"><div class="ig"><span class="igt">/maocs.php/ajax/isHaveNewAfter</span><span class="iga"><svg width="11.7" height="11.6" viewBox="1.03 -0.27 13.94 16.54" preserveAspectRatio="none" fill="currentColor" style="position:absolute;left:9.799999999999955px;top:7.699999999999989px;"><g fill="none" stroke="currentColor" stroke-width="1.900" stroke-linecap="round"><rect x="1.600" y="1.600" width="7.200" height="4.600" rx="2.300" transform="rotate(45 5.200 3.900)"/><rect x="7.200" y="9.800" width="7.200" height="4.600" rx="2.300" transform="rotate(45 10.800 12.100)"/></g></svg></span></div></div><div class="td" style="left:865px;width:127px"><span class="lk">0.0.0.0</span></div><div class="td" style="left:992px;width:173px"><span class="lk" style="font-size:12px;position:relative;top:-1px">Mozilla/5.0</span></div><div class="td" style="left:1165px;width:278px">2025-07-19 15:56:43</div><div class="td" style="left:1443px;width:187px"><span class="bd"><svg width="12.7" height="9.4" viewBox="0.00 2.30 16.00 11.75" preserveAspectRatio="none" fill="currentColor" style="position:absolute;left:6.2999999999999545px;top:5.699999999999989px;"><rect x="0" y="2.300" width="2.300" height="2.300" rx=".4"/><rect x="3.500" y="2.300" width="12.500" height="2.300" rx=".4"/><rect x="0" y="5.450" width="2.300" height="2.300" rx=".4"/><rect x="3.500" y="5.450" width="12.500" height="2.300" rx=".4"/><rect x="0" y="8.600" width="2.300" height="2.300" rx=".4"/><rect x="3.500" y="8.600" width="12.500" height="2.300" rx=".4"/><rect x="0" y="11.750" width="2.300" height="2.300" rx=".4"/><rect x="3.500" y="11.750" width="12.500" height="2.300" rx=".4"/></svg>详情</span><span class="bx"><svg width="9.8" height="10.6" viewBox="2.00 0.40 12.00 13.70" preserveAspectRatio="none" fill="currentColor" style="position:absolute;left:6.2000000000000455px;top:5.399999999999977px;"><path fill-rule="evenodd" d="M5.600 1.200c.2-.5.700-.8 1.200-.8h2.400c.5 0 1 .3 1.200.8l.6 1.400h2.700c.2 0 .3.100.3.300v.6c0 .2-.1.300-.3.300h-.8v8.500c0 1-.7 1.800-1.500 1.800H4.600c-.8 0-1.500-.8-1.500-1.800V3.800h-.8c-.2 0-.3-.1-.3-.3v-.6c0-.2.100-.3.300-.3H5zM6.300 2.600h3.400l-.4-1H6.700zM5.100 5.700v6.500h.9V5.700zm2.450 0v6.500h.9V5.700zm2.450 0v6.500h.9V5.700z"/></svg></span></div></div><div class="tr odd" style="top:416px"><div class="td" style="left:0px;width:44px"><span class="cb" style="top:15px"></span></div><div class="td" style="left:44px;width:132px">117489</div><div class="td" style="left:176px;width:120px"><span class="lk">admin</span></div><div class="td" style="left:296px;width:84px"></div><div class="td" style="left:380px;width:485px"><div class="ig"><span class="igt">/maocs.php/ajax/isHaveNewAfter</span><span class="iga"><svg width="11.7" height="11.6" viewBox="1.03 -0.27 13.94 16.54" preserveAspectRatio="none" fill="currentColor" style="position:absolute;left:9.799999999999955px;top:7.699999999999989px;"><g fill="none" stroke="currentColor" stroke-width="1.900" stroke-linecap="round"><rect x="1.600" y="1.600" width="7.200" height="4.600" rx="2.300" transform="rotate(45 5.200 3.900)"/><rect x="7.200" y="9.800" width="7.200" height="4.600" rx="2.300" transform="rotate(45 10.800 12.100)"/></g></svg></span></div></div><div class="td" style="left:865px;width:127px"><span class="lk">0.0.0.0</span></div><div class="td" style="left:992px;width:173px"><span class="lk" style="font-size:12px;position:relative;top:-1px">Mozilla/5.0</span></div><div class="td" style="left:1165px;width:278px">2025-07-19 15:56:40</div><div class="td" style="left:1443px;width:187px"><span class="bd"><svg width="12.7" height="9.4" viewBox="0.00 2.30 16.00 11.75" preserveAspectRatio="none" fill="currentColor" style="position:absolute;left:6.2999999999999545px;top:5.699999999999989px;"><rect x="0" y="2.300" width="2.300" height="2.300" rx=".4"/><rect x="3.500" y="2.300" width="12.500" height="2.300" rx=".4"/><rect x="0" y="5.450" width="2.300" height="2.300" rx=".4"/><rect x="3.500" y="5.450" width="12.500" height="2.300" rx=".4"/><rect x="0" y="8.600" width="2.300" height="2.300" rx=".4"/><rect x="3.500" y="8.600" width="12.500" height="2.300" rx=".4"/><rect x="0" y="11.750" width="2.300" height="2.300" rx=".4"/><rect x="3.500" y="11.750" width="12.500" height="2.300" rx=".4"/></svg>详情</span><span class="bx"><svg width="9.8" height="10.6" viewBox="2.00 0.40 12.00 13.70" preserveAspectRatio="none" fill="currentColor" style="position:absolute;left:6.2000000000000455px;top:5.399999999999977px;"><path fill-rule="evenodd" d="M5.600 1.200c.2-.5.700-.8 1.200-.8h2.400c.5 0 1 .3 1.200.8l.6 1.400h2.700c.2 0 .3.100.3.300v.6c0 .2-.1.300-.3.300h-.8v8.500c0 1-.7 1.800-1.500 1.800H4.600c-.8 0-1.500-.8-1.500-1.800V3.800h-.8c-.2 0-.3-.1-.3-.3v-.6c0-.2.100-.3.300-.3H5zM6.300 2.600h3.400l-.4-1H6.700zM5.100 5.700v6.500h.9V5.700zm2.450 0v6.500h.9V5.700zm2.450 0v6.500h.9V5.700z"/></svg></span></div></div><div class="tr" style="top:463px"><div class="td" style="left:0px;width:44px"><span class="cb" style="top:15px"></span></div><div class="td" style="left:44px;width:132px">117488</div><div class="td" style="left:176px;width:120px"><span class="lk">admin</span></div><div class="td" style="left:296px;width:84px"></div><div class="td" style="left:380px;width:485px"><div class="ig"><span class="igt">/maocs.php/ajax/isHaveNewAfter</span><span class="iga"><svg width="11.7" height="11.6" viewBox="1.03 -0.27 13.94 16.54" preserveAspectRatio="none" fill="currentColor" style="position:absolute;left:9.799999999999955px;top:7.699999999999989px;"><g fill="none" stroke="currentColor" stroke-width="1.900" stroke-linecap="round"><rect x="1.600" y="1.600" width="7.200" height="4.600" rx="2.300" transform="rotate(45 5.200 3.900)"/><rect x="7.200" y="9.800" width="7.200" height="4.600" rx="2.300" transform="rotate(45 10.800 12.100)"/></g></svg></span></div></div><div class="td" style="left:865px;width:127px"><span class="lk">0.0.0.0</span></div><div class="td" style="left:992px;width:173px"><span class="lk" style="font-size:12px;position:relative;top:-1px">Mozilla/5.0</span></div><div class="td" style="left:1165px;width:278px">2025-07-19 15:56:37</div><div class="td" style="left:1443px;width:187px"><span class="bd"><svg width="12.7" height="9.4" viewBox="0.00 2.30 16.00 11.75" preserveAspectRatio="none" fill="currentColor" style="position:absolute;left:6.2999999999999545px;top:5.699999999999989px;"><rect x="0" y="2.300" width="2.300" height="2.300" rx=".4"/><rect x="3.500" y="2.300" width="12.500" height="2.300" rx=".4"/><rect x="0" y="5.450" width="2.300" height="2.300" rx=".4"/><rect x="3.500" y="5.450" width="12.500" height="2.300" rx=".4"/><rect x="0" y="8.600" width="2.300" height="2.300" rx=".4"/><rect x="3.500" y="8.600" width="12.500" height="2.300" rx=".4"/><rect x="0" y="11.750" width="2.300" height="2.300" rx=".4"/><rect x="3.500" y="11.750" width="12.500" height="2.300" rx=".4"/></svg>详情</span><span class="bx"><svg width="9.8" height="10.6" viewBox="2.00 0.40 12.00 13.70" preserveAspectRatio="none" fill="currentColor" style="position:absolute;left:6.2000000000000455px;top:5.399999999999977px;"><path fill-rule="evenodd" d="M5.600 1.200c.2-.5.700-.8 1.200-.8h2.400c.5 0 1 .3 1.200.8l.6 1.400h2.700c.2 0 .3.100.3.300v.6c0 .2-.1.300-.3.300h-.8v8.500c0 1-.7 1.800-1.500 1.800H4.600c-.8 0-1.500-.8-1.500-1.800V3.800h-.8c-.2 0-.3-.1-.3-.3v-.6c0-.2.100-.3.300-.3H5zM6.300 2.600h3.400l-.4-1H6.700zM5.100 5.700v6.500h.9V5.700zm2.450 0v6.500h.9V5.700zm2.450 0v6.500h.9V5.700z"/></svg></span></div></div></div><div id="pinfo">显示第 1 到第 10 条记录，总共 114207 条记录 每页显示<span id="psize">10<i class="caretup"></i></span>条记录</div><div class="pg" style="left:1134px;width:68px">上一页</div><div class="pg on" style="left:1201px;width:35px">1</div><div class="pg" style="left:1235px;width:33px">2</div><div class="pg" style="left:1267px;width:34px">3</div><div class="pg" style="left:1300px;width:34px">4</div><div class="pg" style="left:1333px;width:33px">5</div><div class="pg dis" style="left:1365px;width:38px">...</div><div class="pg" style="left:1402px;width:64px">11421</div><div class="pg" style="left:1465px;width:68px">下一页</div><div id="jin"></div><div id="jbtn">跳转</div>
</div>
</body>
</html>
